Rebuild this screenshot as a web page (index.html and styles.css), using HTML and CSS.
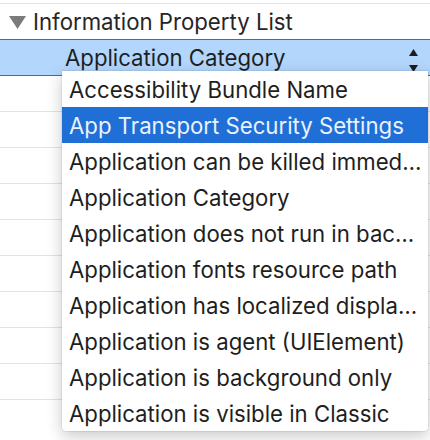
FILE: index.html
```html
<!DOCTYPE html>
<html>
<head>
<meta charset="utf-8">
<link rel="stylesheet" href="styles.css">
</head>
<body>
<div class="sheet">
  <div class="row header">
    <svg class="disclosure" width="17" height="13" viewBox="0 0 17 13"><polygon points="0,0 17,0 8.5,13" fill="#7b7b7b"/></svg>
    <span class="label">Information Property List</span>
  </div>
  <div class="row selected">
    <span class="key">Application Category</span>
    <svg class="stepper" width="9" height="24" viewBox="0 0 9 24"><polygon points="4.5,0 9,7 0,7" fill="#1d1d1d"/><polygon points="0,16 9,16 4.5,23" fill="#1d1d1d"/></svg>
  </div>
  <div class="row after-selected"></div>
  <div class="row"></div>
  <div class="row"></div>
  <div class="row"></div>
  <div class="row"></div>
  <div class="row"></div>
  <div class="row"></div>
  <div class="row"></div>
  <div class="row"></div>
  <div class="row"></div>
</div>
<div class="menu">
  <div class="item">Accessibility Bundle Name</div>
  <div class="item active">App Transport Security Settings</div>
  <div class="item">Application can be killed immed…</div>
  <div class="item">Application Category</div>
  <div class="item">Application does not run in bac…</div>
  <div class="item">Application fonts resource path</div>
  <div class="item">Application has localized displa…</div>
  <div class="item">Application is agent (UIElement)</div>
  <div class="item">Application is background only</div>
  <div class="item">Application is visible in Classic</div>
</div>
</body>
</html>
```
FILE: styles.css
```css
html, body {
  margin: 0;
  padding: 0;
  background: #ffffff;
  overflow: hidden;
  height: 440px;
}
body {
  font-family: Inter, "Liberation Sans", sans-serif;
  font-size: 22.2px;
  color: #232323;
  position: relative;
}
.sheet {
  padding-top: 3px;
  display: flex;
  flex-direction: column;
}
.row {
  height: 36px;
  box-sizing: border-box;
  border-top: 1px solid #e2e2e2;
  display: flex;
  align-items: center;
}
.header {
  padding-left: 9px;
}
.disclosure {
  margin-right: 7px;
  margin-top: 2px;
}
.label {
  color: #262626;
}
.selected {
  border-top-color: #2a6fd6;
  background: #b3d6fd;
  padding-left: 65px;
  padding-right: 12px;
  justify-content: space-between;
}
.key {
  color: #1f1f1f;
}
.stepper {
  margin-top: 7px;
}
.after-selected {
  border-top-color: #2a6fd6;
}
.menu {
  position: absolute;
  left: 62px;
  top: 71px;
  width: 366px;
  background: #ffffff;
  border-radius: 0 0 4px 4px;
  box-shadow: 0 0 0 0.5px rgba(0,0,0,0.12), 0 5px 16px rgba(0,0,0,0.22);
  display: flex;
  flex-direction: column;
}
.item {
  height: 36px;
  padding-left: 7px;
  display: flex;
  align-items: center;
  white-space: nowrap;
  color: #1e1e1e;
}
.item.active {
  background: #1f6fd7;
  color: #eaf2fd;
}
```
